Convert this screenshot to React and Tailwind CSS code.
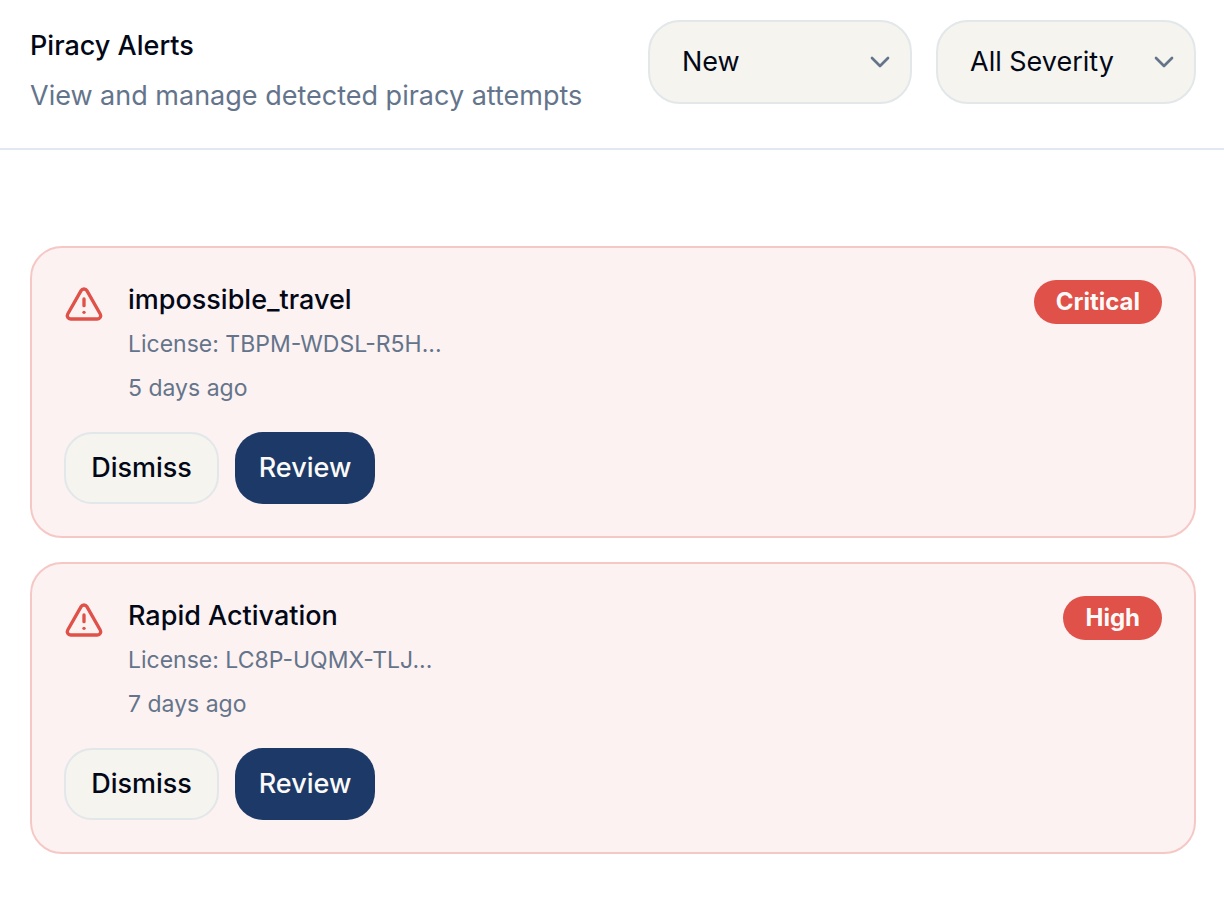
import { TriangleAlert, ChevronDown } from "lucide-react";

const alerts = [
  { title: "impossible_travel", license: "License: TBPM-WDSL-R5H...", time: "5 days ago", severity: "Critical" },
  { title: "Rapid Activation", license: "License: LC8P-UQMX-TLJ...", time: "7 days ago", severity: "High" },
];

function FilterSelect({ label, options, className }) {
  return (
    <div className={`relative ${className}`}>
      <select
        aria-label={label}
        className="h-21 w-full appearance-none rounded-[32px] border-2 border-[#e2e7ea] bg-[#f5f4ef] pl-8 pr-14 text-[27px] text-[#030817]"
      >
        {options.map((option) => (
          <option key={option}>{option}</option>
        ))}
      </select>
      <ChevronDown
        aria-hidden="true"
        strokeWidth={2}
        className="pointer-events-none absolute right-4 top-[26px] size-8 text-[#64748b]"
      />
    </div>
  );
}

function AlertCard({ title, license, time, severity }) {
  return (
    <li className="flex flex-col gap-6 rounded-[32px] border-2 border-[#f5c8c6] bg-[#fcf2f1] p-8">
      <div className="flex items-start justify-between">
        <div className="flex gap-6">
          <TriangleAlert aria-hidden="true" strokeWidth={2} className="mt-1 size-10 shrink-0 text-[#df5149]" />
          <div>
            <h2 className="text-[27px] leading-10 font-medium text-[#030817]">{title}</h2>
            <p className="mt-1 text-[23px] leading-10 text-[#64748b]">{license}</p>
            <p className="mt-1 text-[23px] leading-10 text-[#64748b]">{time}</p>
          </div>
        </div>
        <span className="rounded-full bg-[#df5149] px-[22px] text-2xl leading-11 font-bold text-[#fbfaf8]">
          {severity}
        </span>
      </div>
      <div className="flex gap-4">
        <button
          type="button"
          className="h-18 min-w-[155px] rounded-[28px] border-2 border-[#e2e7ea] bg-[#f5f4ef] px-5 text-[27px] font-medium text-[#030817]"
        >
          Dismiss
        </button>
        <button
          type="button"
          className="h-18 min-w-35 rounded-[28px] bg-[#1c3967] px-5 text-[27px] font-medium text-[#fbfaf8]"
        >
          Review
        </button>
      </div>
    </li>
  );
}

export default function App() {
  return (
    <main className="min-h-screen bg-white font-['Inter',sans-serif]">
      <header className="flex items-start justify-between border-b-2 border-[#e2e8f0] pt-5 pr-7 pb-7 pl-[30px]">
        <div>
          <h1 className="text-[27px] leading-[52px] font-medium text-[#030817]">Piracy Alerts</h1>
          <p className="text-[27px] leading-12 text-[#64748b]">View and manage detected piracy attempts</p>
        </div>
        <div className="flex gap-6">
          <FilterSelect label="Status" options={["New", "Reviewed", "Dismissed"]} className="w-66" />
          <FilterSelect label="Severity" options={["All Severity", "Critical", "High"]} className="w-65" />
        </div>
      </header>
      <ul className="flex flex-col gap-6 pt-24 pr-7 pb-14 pl-[30px]">
        {alerts.map((alert) => (
          <AlertCard key={alert.title} {...alert} />
        ))}
      </ul>
    </main>
  );
}
